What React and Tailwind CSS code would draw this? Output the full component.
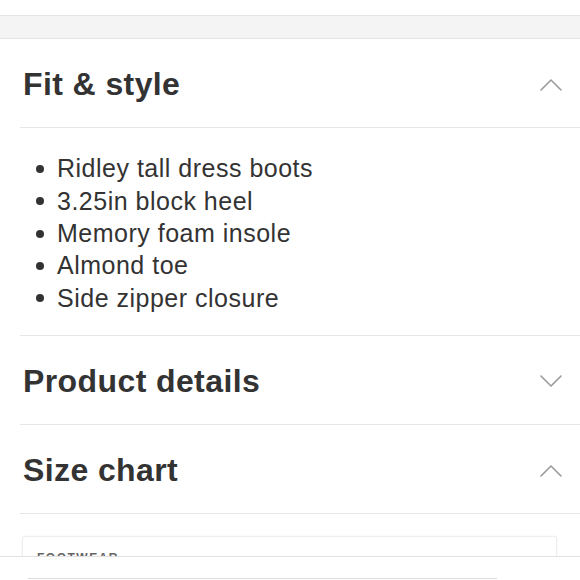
import React from 'react';

const Chevron = ({ up }) => (
    <svg width="22" height="13" viewBox="0 0 22 13" fill="none" className="shrink-0">
        <path
            d={up ? 'M1 12 L11 2 L21 12' : 'M1 1 L11 11 L21 1'}
            stroke="#9a9a9a"
            strokeWidth="1.6"
            strokeLinecap="round"
            strokeLinejoin="round"
        />
    </svg>
);

const SectionHeader = ({ title, open }) => (
    <div className="flex items-center justify-between h-[89px] pt-[2px] pl-[3px] pr-[18px] border-b border-[#e6e6e6]">
        <h2 className="text-[32px] font-bold tracking-[0.4px] text-[#333]">{title}</h2>
        <Chevron up={open} />
    </div>
);

const items = [
    'Ridley tall dress boots',
    '3.25in block heel',
    'Memory foam insole',
    'Almond toe',
    'Side zipper closure',
];

export default function App() {
    return (
        <div
            className="relative w-full h-[580px] overflow-hidden bg-white"
            style={{ fontFamily: '"Liberation Sans", Arial, sans-serif' }}
        >
            <div className="h-[15px]" />
            <div className="h-[24px] bg-[#f4f4f4] border-y border-[#e4e4e4]" />

            <div className="ml-[20px]">
                <SectionHeader title="Fit & style" open />

                <ul className="pt-[25px] pb-[21px] border-b border-[#e6e6e6]">
                    {items.map((item) => (
                        <li key={item} className="flex items-center h-[32.3px] text-[25px] tracking-[0.5px] text-[#333]">
                            <span className="w-[8px] h-[8px] rounded-full bg-[#333] ml-[16px] mr-[13px]" />
                            {item}
                        </li>
                    ))}
                </ul>

                <SectionHeader title="Product details" />
                <SectionHeader title="Size chart" open />
            </div>

            <div className="mt-[22px] ml-[22px] mr-[23px] h-[80px] border border-[#eeeeee] rounded-[2px] shadow-[0_0_3px_rgba(0,0,0,0.05)] px-[14px] pt-[12px]">
                <p className="text-[12px] tracking-[1.5px] text-[#666] font-bold">FOOTWEAR</p>
            </div>

            {/* fixed bottom bar overlapping the content */}
            <div className="absolute left-0 right-0 top-[556px] bottom-0 bg-white border-t border-[#e2e2e2]">
                <div className="mt-[21px] ml-[28px] w-[469px] border-t border-[#dcdcdc]" />
            </div>
        </div>
    );
}
